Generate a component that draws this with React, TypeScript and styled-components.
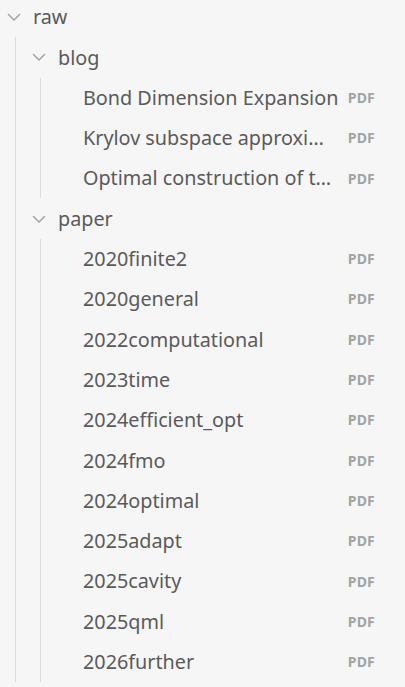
import styled, { createGlobalStyle } from 'styled-components';

const GlobalStyle = createGlobalStyle`
  html, body {
    margin: 0;
    padding: 0;
    background: #f6f6f6;
  }
  body {
    font-family: 'Noto Sans', 'Open Sans', sans-serif;
    overflow: hidden;
  }
`;

interface FileItem {
  name: string;
  ext: string;
}

interface FolderItem {
  name: string;
  children: (FolderItem | FileItem)[];
}

const tree: FolderItem = {
  name: 'raw',
  children: [
    {
      name: 'blog',
      children: [
        { name: 'Bond Dimension Expansion', ext: 'PDF' },
        { name: 'Krylov subspace approximation', ext: 'PDF' },
        { name: 'Optimal construction of tensor networks', ext: 'PDF' },
      ],
    },
    {
      name: 'paper',
      children: [
        { name: '2020finite2', ext: 'PDF' },
        { name: '2020general', ext: 'PDF' },
        { name: '2022computational', ext: 'PDF' },
        { name: '2023time', ext: 'PDF' },
        { name: '2024efficient_opt', ext: 'PDF' },
        { name: '2024fmo', ext: 'PDF' },
        { name: '2024optimal', ext: 'PDF' },
        { name: '2025adapt', ext: 'PDF' },
        { name: '2025cavity', ext: 'PDF' },
        { name: '2025qml', ext: 'PDF' },
        { name: '2026further', ext: 'PDF' },
      ],
    },
  ],
};

const Explorer = styled.nav`
  width: 405px;
  margin-top: -3px;
  color: #5a5a5a;
`;

const Row = styled.div<{ $file?: boolean }>`
  display: flex;
  align-items: center;
  height: 40.3px;
  padding-left: ${(p) => (p.$file ? '33px' : '5px')};
  padding-right: 30px;
  font-size: 19.8px;
  line-height: 1.4;
  box-sizing: border-box;
`;

const Chevron = styled.span`
  display: flex;
  align-items: center;
  justify-content: center;
  width: 18px;
  height: 18px;
  margin-right: 10px;
  color: #a6a6a6;
`;

const Title = styled.span`
  flex: 1;
  min-width: 0;
  white-space: nowrap;
  overflow: hidden;
  text-overflow: ellipsis;
`;

const Tag = styled.span`
  margin-left: 8px;
  font-size: 14px;
  font-weight: 700;
  color: #a3a3a3;
  letter-spacing: 0.2px;
`;

const Children = styled.div`
  margin-left: 15px;
  padding-left: 9px;
  border-left: 1px solid #dcdcdc;
`;

function ChevronDown() {
  return (
    <svg width='14' height='14' viewBox='0 0 14 14' fill='none'>
      <path d='M1.5 4.5 L7 10 L12.5 4.5' stroke='currentColor' strokeWidth='1.6' strokeLinecap='round' strokeLinejoin='round' />
    </svg>
  );
}

function isFolder(item: FolderItem | FileItem): item is FolderItem {
  return 'children' in item;
}

function Folder({ folder }: { folder: FolderItem }) {
  return (
    <div>
      <Row>
        <Chevron>
          <ChevronDown />
        </Chevron>
        <Title>{folder.name}</Title>
      </Row>
      <Children>
        {folder.children.map((child) =>
          isFolder(child) ? (
            <Folder key={child.name} folder={child} />
          ) : (
            <Row key={child.name} $file>
              <Title>{child.name}</Title>
              <Tag>{child.ext}</Tag>
            </Row>
          )
        )}
      </Children>
    </div>
  );
}

export default function App() {
  return (
    <>
      <GlobalStyle />
      <Explorer>
        <Folder folder={tree} />
      </Explorer>
    </>
  );
}
